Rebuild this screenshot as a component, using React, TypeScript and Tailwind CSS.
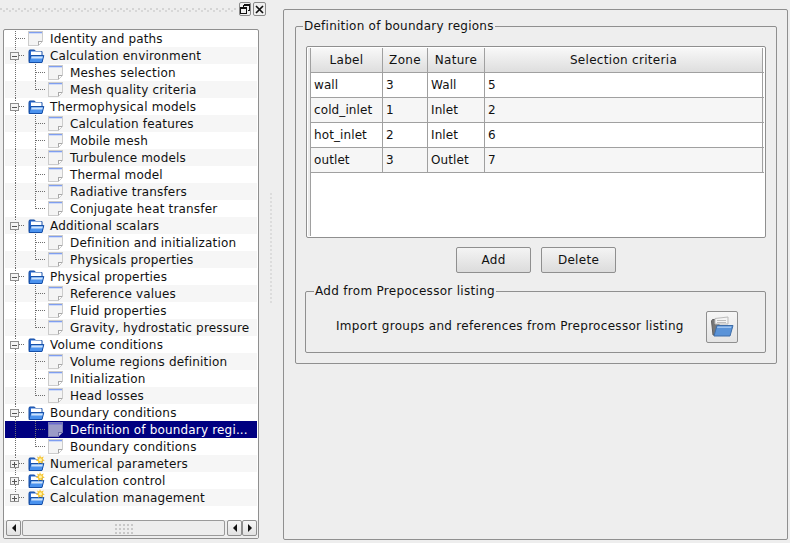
import React from "react";

type Row = { label: string; level: 0 | 1; kind: "page" | "open" | "closed"; last?: boolean; selected?: boolean; end?: boolean };

const rows: Row[] = [
  { label: "Identity and paths", level: 0, kind: "page" },
  { label: "Calculation environment", level: 0, kind: "open" },
  { label: "Meshes selection", level: 1, kind: "page" },
  { label: "Mesh quality criteria", level: 1, kind: "page", last: true },
  { label: "Thermophysical models", level: 0, kind: "open" },
  { label: "Calculation features", level: 1, kind: "page" },
  { label: "Mobile mesh", level: 1, kind: "page" },
  { label: "Turbulence models", level: 1, kind: "page" },
  { label: "Thermal model", level: 1, kind: "page" },
  { label: "Radiative transfers", level: 1, kind: "page" },
  { label: "Conjugate heat transfer", level: 1, kind: "page", last: true },
  { label: "Additional scalars", level: 0, kind: "open" },
  { label: "Definition and initialization", level: 1, kind: "page" },
  { label: "Physicals properties", level: 1, kind: "page", last: true },
  { label: "Physical properties", level: 0, kind: "open" },
  { label: "Reference values", level: 1, kind: "page" },
  { label: "Fluid properties", level: 1, kind: "page" },
  { label: "Gravity, hydrostatic pressure", level: 1, kind: "page", last: true },
  { label: "Volume conditions", level: 0, kind: "open" },
  { label: "Volume regions definition", level: 1, kind: "page" },
  { label: "Initialization", level: 1, kind: "page" },
  { label: "Head losses", level: 1, kind: "page", last: true },
  { label: "Boundary conditions", level: 0, kind: "open" },
  { label: "Definition of boundary regi...", level: 1, kind: "page", selected: true },
  { label: "Boundary conditions", level: 1, kind: "page", last: true },
  { label: "Numerical parameters", level: 0, kind: "closed" },
  { label: "Calculation control", level: 0, kind: "closed" },
  { label: "Calculation management", level: 0, kind: "closed", end: true },
];

const regions = [
  ["wall", "3", "Wall", "5"],
  ["cold_inlet", "1", "Inlet", "2"],
  ["hot_inlet", "2", "Inlet", "6"],
  ["outlet", "3", "Outlet", "7"],
];

const PageIcon = ({ x, selected }: { x: number; selected?: boolean }) => (
  <g transform={`translate(${x} 1)`} shapeRendering="crispEdges">
    <path d="M0.5 0.5H14.5V10.5L10.5 14.5H0.5Z" fill={selected ? "#9c9cc8" : "#f4f4f4"} stroke={selected ? "#7c7cb4" : "#cccccc"} />
    <path d="M1 1H14V2H1Z" fill={selected ? "#6a6ad0" : "#7f9ef0"} />
    <path d="M1 2H14V3H1Z" fill={selected ? "#8484c8" : "#d0dcf8"} />
    <path d="M14 10.5H10.5V14" fill={selected ? "#c4c4de" : "#ffffff"} stroke={selected ? "#6c6ca8" : "#a8a8a8"} />
  </g>
);

const FolderIcon = ({ x, star }: { x: number; star?: boolean }) => (
  <g transform={`translate(${x} 1)`}>
    <path d="M1 3.5L1.5 2H6.5L7.5 3.5H14V13.5H1Z" fill="#2a6ad0" stroke="#134aa0" strokeWidth="1" />
    <path d="M3 3.5H13.5V7.5H3Z" fill="#ffffff" />
    <path d="M1 14.5L2.8 7.5H15.8L14 14.5Z" fill="#4a92ee" stroke="#154fa8" strokeWidth="1" />
    <path d="M3.6 8.5H14.8L14.4 10.5H3.1Z" fill="#cfe3fb" />
    {star && (
      <g>
        <path d="M12 -1L13 1.5L15.8 0.5L14.6 3L16.8 4.5L14.4 5.2L14.8 7.8L12.4 6.4L10.2 7.8L10.2 5.2L7.8 4.5L10 3L9 0.5L11.2 1.5Z" fill="#f7c531" />
        <circle cx="12.4" cy="3.8" r="1.6" fill="#fff3a8" />
      </g>
    )}
  </g>
);

// guide lines, expander box and icon of one tree row
const RowGlyphs = ({ row, index }: { row: Row; index: number }) => {
  const dots = "#6e6e6e";
  const hasBox = row.kind !== "page";
  return (
    <svg width={row.level === 1 ? 65 : 45} height={17} className="shrink-0">
      <g stroke={dots} strokeDasharray="1 1" shapeRendering="crispEdges">
        {row.level === 1 && <line x1="10.5" x2="10.5" y1="0" y2="17" />}
        {row.level === 1 && <line x1="30.5" x2="30.5" y1="0" y2={row.last ? 9 : 17} />}
        {row.level === 1 && <line x1="31" x2="41" y1="8.5" y2="8.5" />}
        {row.level === 0 && !hasBox && (
          <>
            <line x1="10.5" x2="10.5" y1={index === 0 ? 1 : 0} y2="17" />
            <line x1="11" x2="20" y1="8.5" y2="8.5" />
          </>
        )}
        {row.level === 0 && hasBox && (
          <>
            <line x1="10.5" x2="10.5" y1="0" y2="4" />
            {!row.end && <line x1="10.5" x2="10.5" y1="13" y2="17" />}
            <line x1="14" x2="20" y1="8.5" y2="8.5" />
          </>
        )}
        {row.kind === "open" && <line x1="30.5" x2="30.5" y1="15" y2="17" />}
      </g>
      {hasBox && (
        <g shapeRendering="crispEdges">
          <rect x="5.5" y="5.5" width="8" height="7" fill="#f4f4f4" stroke="#8e8e8e" />
          <line x1="7" x2="12" y1="9.5" y2="9.5" stroke="#555555" />
          {row.kind === "closed" && <line x1="9.5" x2="9.5" y1="7" y2="12" stroke="#555555" />}
        </g>
      )}
      {row.kind === "page" ? (
        <PageIcon x={row.level === 1 ? 43 : 23} selected={row.selected} />
      ) : (
        <FolderIcon x={23} star={row.kind === "closed"} />
      )}
    </svg>
  );
};

const TreeRow = ({ row, index }: { row: Row; index: number }) => (
  <div
    className={`flex h-[17px] items-center whitespace-nowrap tracking-[0.17px] ${
      row.selected ? "bg-[#000080] text-white" : index % 2 ? "bg-[#f6f6f6]" : "bg-white"
    }`}
  >
    <RowGlyphs row={row} index={index} />
    <span>{row.label}</span>
  </div>
);

const ArrowButton = ({ dir, className }: { dir: "left" | "right"; className: string }) => (
  <div className={`flex h-[16px] w-[15px] items-center justify-center rounded-[2px] border border-[#8f8f8f] bg-gradient-to-b from-[#f6f6f6] to-[#e2e2e2] ${className}`}>
    <svg width="6" height="8">
      <path d={dir === "left" ? "M5 0V8L1 4Z" : "M1 0V8L5 4Z"} fill="#111111" />
    </svg>
  </div>
);

const TreeScrollbar = () => (
  <div className="flex h-[17px] items-start pl-[2px] pr-[1px]">
    <ArrowButton dir="left" className="" />
    <div className="ml-[1px] flex h-[16px] w-[203px] items-center justify-center rounded-[2px] border border-[#9a9a9a] bg-[#ededed]">
      <svg width="20" height="11">
        {[0, 1, 2].map((r) =>
          [0, 1, 2, 3, 4].map((c) => (
            <rect key={`${r}${c}`} x={c * 4 + 1} y={r * 4 + 1} width="2" height="2" fill="#c8c8c8" />
          ))
        )}
      </svg>
    </div>
    <ArrowButton dir="left" className="ml-[2px]" />
    <ArrowButton dir="right" className="" />
  </div>
);

const DockGrip = () => (
  <svg width="236" height="5" className="block">
    <defs>
      <pattern id="grip" width="6" height="5" patternUnits="userSpaceOnUse">
        <rect x="0" y="0" width="2" height="2" fill="#d4d4d4" />
        <rect x="3" y="2" width="2" height="2" fill="#d8d8d8" />
      </pattern>
    </defs>
    <rect width="236" height="5" fill="url(#grip)" />
  </svg>
);

const DockButton = ({ children, className }: { children: React.ReactNode; className: string }) => (
  <div className={`flex h-[14px] items-center justify-center rounded-[2px] border border-[#8a8a8a] bg-[#f0f0f0] ${className}`}>
    {children}
  </div>
);

const SelectedColumns = "grid grid-cols-[72px_45px_57px_278px]";

const RegionsTable = () => (
  <div className="ml-[10px] mt-[11px] flex h-[192px] w-[460px] rounded-[2px] border border-[#8f8f8f] bg-white p-[1px]">
    <div className="w-[3px] shrink-0 border-r border-[#a0a0a0] bg-[#eeeeee]" />
    <div className="flex-1">
      <div className={`${SelectedColumns} h-[25px] border-b border-[#a0a0a0]`}>
        {["Label", "Zone", "Nature", "Selection criteria"].map((h) => (
          <div key={h} className="flex items-center justify-center border-r border-[#a0a0a0] bg-gradient-to-b from-[#f8f8f8] to-[#dedede] pb-[1px]">
            {h}
          </div>
        ))}
      </div>
      {regions.map((r, i) => (
        <div key={r[0]} className={`${SelectedColumns} h-[25px] border-b border-[#a0a0a0] tracking-[0.1px] ${i % 2 ? "bg-[#f6f6f6]" : "bg-white"}`}>
          {r.map((c, j) => (
            <div key={j} className="flex items-center border-r border-[#a0a0a0] pl-[3px]">
              {c}
            </div>
          ))}
        </div>
      ))}
    </div>
  </div>
);

const PushButton = ({ label }: { label: string }) => (
  <div className="flex h-[26px] w-[75px] items-center justify-center rounded-[2px] border border-[#8f8f8f] bg-gradient-to-b from-[#f4f4f4] to-[#dcdcdc]">
    {label}
  </div>
);

const OpenIcon = () => (
  <svg width="24" height="22" viewBox="0 0 24 22">
    <path d="M1.5 5L2.5 3.5H8L9 5V19H3Z" fill="#777777" stroke="#606060" />
    <path d="M5 2.5L18 1V8H5Z" fill="#f4f4f4" stroke="#bbbbbb" />
    <path d="M7 4.5H16M7 6.5H16" stroke="#bdbdbd" />
    <path d="M4 20L7 9.5H23L20 20Z" fill="#5a93d8" stroke="#3e6da8" />
    <path d="M7.5 10.5H21.5L21 12H7Z" fill="#9cc2ee" />
  </svg>
);

export default function App() {
  return (
    <div className="flex h-[543px] w-[790px] overflow-hidden bg-[#eeeeee] font-['DejaVu_Sans',sans-serif] text-[12px] leading-none tracking-[0.3px] text-[#111111]">
      {/* Left dock with the tree */}
      <div className="w-[267px] shrink-0">
        <div className="flex h-[29px] items-start pt-[2px]">
          <div className="mt-[6px] w-[236px]">
            <DockGrip />
          </div>
          <div className="ml-[3px] flex gap-[2px]">
            <DockButton className="w-[12px]">
              <svg width="10" height="10" shapeRendering="crispEdges">
                <path d="M3.5 0.5H9.5V6.5H7.5M3.5 0.5V2.5" fill="none" stroke="#111" />
                <path d="M3 1.5H9.5" stroke="#111" />
                <rect x="0.5" y="3.5" width="6" height="6" fill="none" stroke="#111" />
                <path d="M0 4.5H7" stroke="#111" />
              </svg>
            </DockButton>
            <DockButton className="w-[13px]">
              <svg width="9" height="9">
                <path d="M1 1L8 8M8 1L1 8" stroke="#111" strokeWidth="1.7" />
              </svg>
            </DockButton>
          </div>
        </div>
        <div className="ml-[3px] flex h-[510px] w-[256px] flex-col rounded-[2px] border border-[#8f8f8f] bg-white">
          <div className="flex-1 px-[1px]">
            {rows.map((row, i) => (
              <TreeRow key={i} row={row} index={i} />
            ))}
          </div>
          <div className="h-[18px] bg-[#eeeeee]">
            <TreeScrollbar />
          </div>
        </div>
      </div>

      {/* Splitter */}
      <div className="flex w-[16px] shrink-0 items-center pl-[3px]">
        <div className="-mt-[48px] h-[110px] border-l-2 border-dotted border-[#dcdcdc]" />
      </div>

      {/* Right page */}
      <div className="mt-[9px] h-[531px] w-[505px] shrink-0 rounded-[2px] border border-[#8f8f8f] pl-[11px] pt-[8px]">
        <fieldset className="h-[346px] w-[482px] rounded-[2px] border border-[#8f8f8f]">
          <legend className="ml-[7px] h-[17px] px-[1px] leading-[17px] tracking-[0.24px]">Definition of boundary regions</legend>
          <RegionsTable />
          <div className="mt-[9px] flex gap-[10px] pl-[160px]">
            <PushButton label="Add" />
            <PushButton label="Delete" />
          </div>
          <fieldset className="ml-[9px] mt-[10px] h-[70px] w-[461px] rounded-[2px] border border-[#8f8f8f]">
            <legend className="ml-[8px] h-[17px] px-[1px] leading-[16px]">Add from Prepocessor listing</legend>
            <div className="flex items-center pl-[30px] pt-[11px]">
              <span className="w-[370px] whitespace-nowrap pb-[2px]">Import groups and references from Preprocessor listing</span>
              <div className="flex h-[32px] w-[32px] items-center justify-center rounded-[2px] border border-[#8f8f8f] bg-gradient-to-b from-[#f6f6f6] to-[#e4e4e4]">
                <OpenIcon />
              </div>
            </div>
          </fieldset>
        </fieldset>
      </div>
    </div>
  );
}
